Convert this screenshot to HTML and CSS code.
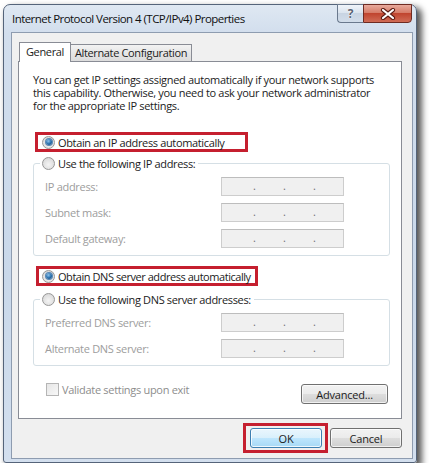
FILE: index.html
```html
<!DOCTYPE html>
<html lang="en">
<head>
<meta charset="utf-8">
<title>Internet Protocol Version 4 (TCP/IPv4) Properties</title>
<link rel="stylesheet" href="styles.css">
</head>
<body>
<div class="window">
  <div class="titlebar">
    <span class="title">Internet Protocol Version 4 (TCP/IPv4) Properties</span>
    <div class="caption-buttons">
      <div class="cbtn help"><span>?</span></div>
      <div class="cbtn close">
        <svg width="16" height="12" viewBox="0 0 16 12">
          <path d="M3 2 L13 10 M13 2 L3 10" stroke="#5b1a12" stroke-width="4.2" stroke-linecap="round" fill="none"/>
          <path d="M3 2 L13 10 M13 2 L3 10" stroke="#ffffff" stroke-width="2.2" stroke-linecap="round" fill="none"/>
        </svg>
      </div>
    </div>
  </div>
  <div class="client">
    <div class="tabs">
      <div class="tab active">General</div>
      <div class="tab">Alternate Configuration</div>
    </div>
    <div class="panel">
      <div class="desc">
        <div class="line">You can get IP settings assigned automatically if your network supports</div>
        <div class="line">this capability. Otherwise, you need to ask your network administrator</div>
        <div class="line">for the appropriate IP settings.</div>
      </div>

      <div class="hl hl-ip">
        <div class="radio-row"><span class="radio checked"></span><span>Obtain an IP address automatically</span></div>
      </div>

      <fieldset class="group">
        <legend><div class="radio-row"><span class="radio"></span><span>Use the following IP address:</span></div></legend>
        <div class="field"><span class="flabel">IP address:</span><div class="ipbox"><span>.</span><span>.</span><span>.</span></div></div>
        <div class="field"><span class="flabel">Subnet mask:</span><div class="ipbox"><span>.</span><span>.</span><span>.</span></div></div>
        <div class="field"><span class="flabel">Default gateway:</span><div class="ipbox"><span>.</span><span>.</span><span>.</span></div></div>
      </fieldset>

      <div class="hl hl-dns">
        <div class="radio-row"><span class="radio checked"></span><span>Obtain DNS server address automatically</span></div>
      </div>

      <fieldset class="group">
        <legend><div class="radio-row"><span class="radio"></span><span>Use the following DNS server addresses:</span></div></legend>
        <div class="field"><span class="flabel">Preferred DNS server:</span><div class="ipbox"><span>.</span><span>.</span><span>.</span></div></div>
        <div class="field"><span class="flabel">Alternate DNS server:</span><div class="ipbox"><span>.</span><span>.</span><span>.</span></div></div>
      </fieldset>

      <div class="bottom-row">
        <div class="check-row"><span class="checkbox"></span><span class="disabled">Validate settings upon exit</span></div>
        <div class="btn advanced">Advanced...</div>
      </div>
    </div>
    <div class="dialog-buttons">
      <div class="hl hl-ok"><div class="btn default">OK</div></div>
      <div class="btn">Cancel</div>
    </div>
  </div>
</div>
</body>
</html>
```

FILE: styles.css
```css
* { box-sizing: border-box; }

body {
  margin: 0;
  background: #ffffff;
  font-family: "Open Sans", "Noto Sans", sans-serif;
  font-size: 11px;
  color: #1b1b1b;
}

.window {
  margin: 4px 0 0 3px;
  width: 414px;
  height: 459px;
  border: 1px solid #55647a;
  border-radius: 7px 7px 3px 3px;
  background: linear-gradient(#dfe8f2, #d2deed 28px, #c9d8ea 60%, #d3dfee);
  box-shadow: 4px 4px 6px 1px rgba(0, 0, 0, 0.65);
  display: flex;
  flex-direction: column;
}

.titlebar {
  height: 27px;
  display: flex;
  justify-content: space-between;
  align-items: flex-start;
  padding: 0 4px 0 8px;
}

.title {
  font-size: 11.5px;
  line-height: 27px;
  letter-spacing: -0.55px;
  color: #101010;
}

.caption-buttons {
  display: flex;
  margin-top: -1px;
}

.cbtn {
  height: 19px;
  display: flex;
  align-items: center;
  justify-content: center;
  border: 1px solid #6a798d;
}

.cbtn.help {
  width: 26px;
  border-right: none;
  border-radius: 0 0 0 4px;
  background: linear-gradient(#f0f4f9, #dbe4ee 45%, #c8d4e2 50%, #d2ddea);
  font-weight: bold;
  font-size: 12px;
  color: #5a6472;
  text-shadow: 0 0 2px #ffffff, 0 0 1px #ffffff;
}

.cbtn.close {
  width: 49px;
  border-color: #6e2b22;
  border-radius: 0 0 4px 0;
  background: linear-gradient(#e8aa9c, #d67d69 45%, #c0452f 50%, #d06c56);
}

.client {
  flex: 1;
  margin: 0 3px 3px 7px;
  background: #f0f0f0;
  border: 1px solid #8e9cb0;
  padding: 9px 10px 0 6px;
  display: flex;
  flex-direction: column;
}

.tabs {
  display: flex;
  align-items: flex-end;
  padding-left: 1px;
  margin-bottom: -1px;
  position: relative;
  z-index: 1;
}

.tab {
  height: 17px;
  margin-bottom: 1px;
  width: 121px;
  border: 1px solid #898c95;
  border-left: none;
  border-bottom: none;
  background: linear-gradient(#f3f3f3, #e6e6e6 50%, #dcdcdc);
  line-height: 15px;
  letter-spacing: -0.35px;
  text-align: center;
  white-space: nowrap;
}

.tab.active {
  height: 20px;
  margin-bottom: 0;
  width: 52px;
  border-left: 1px solid #898c95;
  background: #ffffff;
  line-height: 17px;
}

.panel {
  height: 358px;
  background: #ffffff;
  border: 1px solid #898c95;
  padding: 11px 13px 0 14px;
}

.desc {
  letter-spacing: -0.32px;
  white-space: nowrap;
}

.desc .line {
  height: 13px;
  line-height: 13px;
}

.radio-row {
  display: flex;
  align-items: center;
  height: 14px;
  letter-spacing: -0.35px;
  white-space: nowrap;
  color: #1b1b1b;
}

.radio {
  width: 13px;
  height: 13px;
  border-radius: 50%;
  border: 1px solid #979797;
  background: radial-gradient(circle at 50% 60%, #f4f4f4 0, #e2e2e2 55%, #d0d0d0 100%);
  margin-right: 3px;
  flex: none;
  display: flex;
  align-items: center;
  justify-content: center;
}

.radio.checked::after {
  content: "";
  width: 6px;
  height: 6px;
  border-radius: 50%;
  background: radial-gradient(circle at 40% 35%, #8fc4ec 0, #2a72b0 50%, #0e3f6e 100%);
  box-shadow: 0 0 0 1px #5787b5;
}

.hl {
  border: 3px solid #c51f2f;
}

.hl-ip {
  margin: 20px 0 0 2px;
  width: 213px;
  height: 20px;
  padding: 0 0 0 4px;
  display: flex;
  align-items: center;
}

.hl-dns {
  margin: 10px 0 0 3px;
  width: 222px;
  height: 20px;
  padding: 0 0 0 3px;
  display: flex;
  align-items: center;
}

.hl-dns .radio-row { letter-spacing: -0.45px; }

.group {
  margin: 4px -2px 0 0;
  padding: 0 0 7px 11px;
  border: 1px solid #d5dfe5;
  border-radius: 3px;
  min-width: 0;
}

.group + .hl { margin-top: 10px; }
.hl-dns + .group { margin-top: 6px; }

.group legend {
  margin-left: -5px;
  padding: 0 3px 0 2px;
}

.field {
  display: flex;
  align-items: center;
  height: 19px;
  margin-top: 7px;
}

.flabel {
  width: 176px;
  color: #9d9d9d;
  letter-spacing: -0.3px;
  white-space: nowrap;
}

.ipbox {
  width: 123px;
  height: 19px;
  background: #f0f0f0;
  border: 1px solid #cdcdcd;
  border-top-color: #bdbdbd;
  display: flex;
  padding-left: 31px;
  gap: 27px;
  line-height: 15px;
  color: #6f6f6f;
}

.ipbox span { width: 3px; text-align: center; }

.bottom-row {
  margin-top: 17px;
  display: flex;
  justify-content: space-between;
  align-items: flex-start;
}

.check-row {
  display: flex;
  align-items: center;
  height: 13px;
  margin-left: 13px;
}

.checkbox {
  width: 13px;
  height: 13px;
  border: 1px solid #b5b5b5;
  background: linear-gradient(135deg, #e6e6e6, #f8f8f8);
  margin-right: 3px;
}

.disabled {
  color: #8d8d8d;
  letter-spacing: -0.3px;
  white-space: nowrap;
}

.btn {
  width: 72px;
  height: 20px;
  border: 1px solid #707070;
  border-radius: 3px;
  background: linear-gradient(#f2f2f2, #ebebeb 49%, #dddddd 51%, #cfcfcf);
  box-shadow: inset 0 0 0 1px rgba(255, 255, 255, 0.7);
  display: flex;
  align-items: center;
  justify-content: center;
  letter-spacing: -0.2px;
  color: #1b1b1b;
}

.btn.advanced {
  width: 87px;
  margin-top: 1px;
}

.btn.default {
  border-color: #3c7fb1;
  background: linear-gradient(#eaf6fd, #d9f0fc 49%, #bee6fd 51%, #a7d9f5);
  box-shadow: inset 0 0 0 1px rgba(255, 255, 255, 0.8);
}

.dialog-buttons {
  margin-top: 4px;
  display: flex;
  justify-content: flex-end;
  align-items: center;
  gap: 2px;
}

.hl-ok {
  padding: 2px 3px 2px 4px;
}
```
